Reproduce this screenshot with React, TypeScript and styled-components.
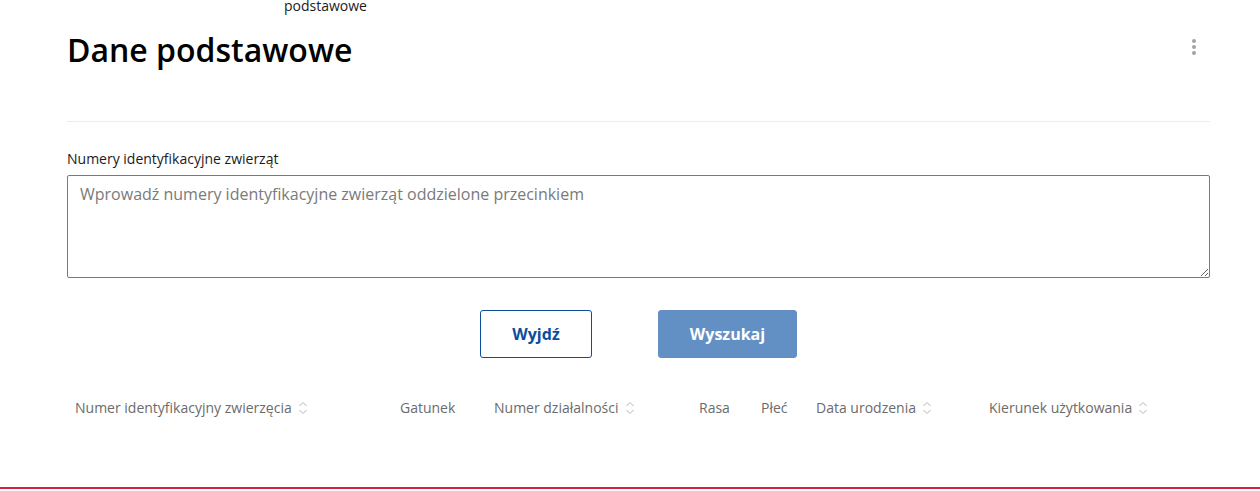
import styled, { createGlobalStyle } from 'styled-components';

const GlobalStyle = createGlobalStyle`
  html, body {
    margin: 0;
    padding: 0;
    background: #ffffff;
    font-family: 'Open Sans', 'Noto Sans', sans-serif;
    color: #1b1b1b;
  }
`;

const Page = styled.div`
  width: 1260px;
  height: 491px;
  display: flex;
  flex-direction: column;
  overflow: hidden;
`;

const Crumb = styled.div`
  height: 13px;
  padding-left: 284px;
  font-size: 14px;
  line-height: 12px;
  color: #1b1b1b;
`;

const Main = styled.main`
  flex: 1;
  padding: 0 50px 0 67px;
  display: flex;
  flex-direction: column;
`;

const Header = styled.div`
  display: flex;
  align-items: flex-start;
  justify-content: space-between;
  padding-top: 17px;
  height: 109px;
  border-bottom: 1px solid #ececec;
  box-sizing: border-box;
`;

const Title = styled.h1`
  margin: 0;
  font-size: 32px;
  font-weight: 600;
  line-height: 40px;
  color: #000;
`;

const Kebab = styled.button`
  margin-top: 9px;
  margin-right: 13px;
  width: 6px;
  padding: 0;
  border: 0;
  background: none;
  display: flex;
  flex-direction: column;
  align-items: center;
  gap: 2px;
  cursor: pointer;
`;

const Dot = styled.span`
  width: 4px;
  height: 4px;
  border-radius: 50%;
  background: #a3a3a3;
`;

const Field = styled.div`
  margin-top: 27px;
  display: flex;
  flex-direction: column;
`;

const Label = styled.label`
  font-size: 14px;
  line-height: 20px;
  margin-bottom: 6px;
  color: #1b1b1b;
`;

const TextArea = styled.textarea`
  box-sizing: border-box;
  width: 100%;
  height: 103px;
  border: 1px solid #7a7a7a;
  border-radius: 2px;
  padding: 7px 12px;
  font-family: 'Open Sans', 'Noto Sans', sans-serif;
  font-size: 16px;
  line-height: 22px;
  color: #1b1b1b;
  resize: vertical;
  outline: none;

  &::placeholder {
    color: #7a7a7a;
  }
`;

const Actions = styled.div`
  display: flex;
  justify-content: center;
  gap: 66px;
  margin-top: 32px;
`;

const Button = styled.button<{ $primary?: boolean }>`
  box-sizing: border-box;
  height: 48px;
  min-width: ${(p) => (p.$primary ? '139px' : '112px')};
  border-radius: 3px;
  font-family: 'Open Sans', 'Noto Sans', sans-serif;
  font-size: 16px;
  font-weight: 700;
  cursor: pointer;
  border: 1px solid ${(p) => (p.$primary ? '#6390c4' : '#0b4e9b')};
  background: ${(p) => (p.$primary ? '#6390c4' : '#ffffff')};
  color: ${(p) => (p.$primary ? '#ffffff' : '#0b4e9b')};
`;

const Table = styled.table`
  margin-top: 32px;
  width: 100%;
  border-collapse: collapse;
  table-layout: fixed;
`;

const Th = styled.th`
  text-align: left;
  font-weight: 400;
  font-size: 14px;
  line-height: 20px;
  color: #6b6b6b;
  padding: 8px 0 8px 8px;
  white-space: nowrap;
`;

const SortWrap = styled.span`
  display: inline-flex;
  vertical-align: middle;
  margin-left: 5px;
  margin-top: -3px;
`;

const Footer = styled.div`
  height: 2px;
  background: #d0253f;
  margin-bottom: 2px;
`;

function SortIcon() {
  return (
    <SortWrap>
      <svg width="12" height="16" viewBox="0 0 12 16" fill="none" stroke="#b5b5b5" strokeWidth="1">
        <polyline points="2.5,6 6,2.5 9.5,6" />
        <polyline points="2.5,10 6,13.5 9.5,10" />
      </svg>
    </SortWrap>
  );
}

const columns: { label: string; width: number; sort?: boolean }[] = [
  { label: 'Numer identyfikacyjny zwierzęcia', width: 325, sort: true },
  { label: 'Gatunek', width: 94 },
  { label: 'Numer działalności', width: 205, sort: true },
  { label: 'Rasa', width: 62 },
  { label: 'Płeć', width: 55 },
  { label: 'Data urodzenia', width: 173, sort: true },
  { label: 'Kierunek użytkowania', width: 229, sort: true },
];

export default function App() {
  return (
    <>
      <GlobalStyle />
      <Page>
        <Crumb>podstawowe</Crumb>
        <Main>
          <Header>
            <Title>Dane podstawowe</Title>
            <Kebab aria-label="Więcej">
              <Dot />
              <Dot />
              <Dot />
            </Kebab>
          </Header>

          <Field>
            <Label htmlFor="ids">Numery identyfikacyjne zwierząt</Label>
            <TextArea id="ids" placeholder="Wprowadź numery identyfikacyjne zwierząt oddzielone przecinkiem" />
          </Field>

          <Actions>
            <Button>Wyjdź</Button>
            <Button $primary>Wyszukaj</Button>
          </Actions>

          <Table>
            <colgroup>
              {columns.map((c) => (
                <col key={c.label} style={{ width: c.width }} />
              ))}
            </colgroup>
            <thead>
              <tr>
                {columns.map((c) => (
                  <Th key={c.label}>
                    {c.label}
                    {c.sort && <SortIcon />}
                  </Th>
                ))}
              </tr>
            </thead>
          </Table>
        </Main>
        <Footer />
      </Page>
    </>
  );
}
